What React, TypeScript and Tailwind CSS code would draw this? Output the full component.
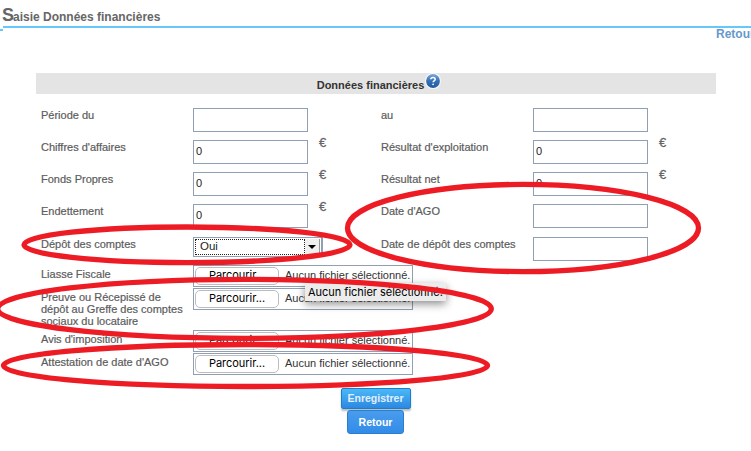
import React from "react";

const label = "block text-[11px] leading-[12px] text-[#5c5c5c] [-webkit-text-stroke:0.2px_#5c5c5c]";

function Field({ value = "" }: { value?: string }) {
  return (
    <div className="h-6 w-[115px] border border-[#90a0b2] bg-white pl-[2px] pt-[4px] text-[11px] leading-[13px] text-[#222]">
      {value}
    </div>
  );
}

function Cell({ text, value, euro }: { text: string; value?: string; euro?: boolean }) {
  return (
    <div className="flex w-[340px] shrink-0">
      <span className={`${label} w-[152px] shrink-0 pt-px`}>{text}</span>
      <Field value={value} />
      {euro && (
        <span className="ml-[11px] -mt-[4px] text-[13px] leading-[14px] text-[#666] [-webkit-text-stroke:0.3px_#666]">€</span>
      )}
    </div>
  );
}

function FileRow({ text, height }: { text: string; height: string }) {
  return (
    <div className={`flex ${height}`}>
      <span className={`${label} w-[152px] shrink-0 pr-[8px] pt-[3px]`}>{text}</span>
      <div className="flex h-[22px] w-[220px] items-start border border-[#90a0b2] bg-white pl-px pt-px">
        <span className="h-[18px] w-[84px] shrink-0 rounded-[5px] border border-[#bdbdbd] bg-white text-center font-[Inter,sans-serif] text-[11px] leading-[15px] tracking-[-0.02px] text-black">
          Parcourir...
        </span>
        <span className="ml-[6px] whitespace-nowrap text-[11px] leading-[16px] text-[#333]">
          Aucun fichier sélectionné.
        </span>
      </div>
    </div>
  );
}

function HelpIcon() {
  return (
    <svg className="ml-px h-4 w-4" viewBox="0 0 16 16">
      <defs>
        <linearGradient id="help" x1="0" y1="0" x2="0" y2="1">
          <stop offset="0" stopColor="#78a9dc" />
          <stop offset="0.5" stopColor="#3470b5" />
          <stop offset="1" stopColor="#2258a0" />
        </linearGradient>
      </defs>
      <circle cx="8" cy="8" r="8" fill="#f8f8f8" />
      <circle cx="8" cy="8" r="6.9" fill="url(#help)" />
      <path d="M5.8 6.3c.1-1.4 1-1.9 2.2-1.9s2.2.6 2.2 1.8c0 1.6-2.1 1.6-2.1 3.1" fill="none" stroke="#fff" strokeWidth="1.5" />
      <circle cx="8.1" cy="11.3" r="0.9" fill="#fff" />
    </svg>
  );
}

export default function App() {
  return (
    <div className="relative h-[451px] w-[751px] overflow-hidden bg-white font-['Liberation_Sans',Arial,sans-serif]">
      <header className="h-[26px] pl-[2px] pt-[6px]">
        <h1 className="flex items-baseline whitespace-nowrap text-[12px] font-bold leading-[18px] text-[#666]">
          <span className="w-[11px] text-[18px]">S</span>
          <span>aisie Données financières</span>
        </h1>
      </header>
      <div className="flex h-[5px]">
        <div className="mt-[3px] h-[2px] w-[3px] bg-[#66c8fa]" />
        <div className="h-[2px] flex-1 bg-[#66c8fa]" />
      </div>
      <div className="flex h-[42px] justify-end">
        <a className="-mt-[4px] w-[35px] whitespace-nowrap text-[12px] font-bold leading-[14px] text-[#6699cc]">Retour</a>
      </div>

      <main className="ml-9 w-[680px]">
        <div className="flex h-[21px] justify-center bg-[#e4e4e4] pl-[6px]">
          <h2 className="pt-[6px] text-[11px] font-bold leading-[12px] text-[#333]">Données financières</h2>
          <HelpIcon />
        </div>

        <div className="ml-[5px] pt-[14px]">
          <div className="flex h-8"><Cell text="Période du" /><Cell text="au" /></div>
          <div className="flex h-8"><Cell text="Chiffres d'affaires" value="0" euro /><Cell text="Résultat d'exploitation" value="0" euro /></div>
          <div className="flex h-8"><Cell text="Fonds Propres" value="0" euro /><Cell text="Résultat net" value="0" euro /></div>
          <div className="flex h-[33px]"><Cell text="Endettement" value="0" euro /><Cell text="Date d'AGO" /></div>
          <div className="flex h-[28px]">
            <div className="flex w-[340px] shrink-0">
              <span className={`${label} w-[152px] shrink-0 pt-px`}>Dépôt des comptes</span>
              <div className="flex h-5 w-[130px] border border-r-2 border-[#90a0b2] p-px">
                <span className="h-4 w-[110px] border border-dotted border-[#222] pl-[4px] text-[11.5px] leading-[13px] text-[#222]">Oui</span>
                <span className="flex flex-1 items-center justify-center border-r border-[#999] bg-[#f0f0f0]">
                  <span className="border-x-[4px] border-t-[4px] border-x-transparent border-t-black" />
                </span>
              </div>
            </div>
            <Cell text="Date de dépôt des comptes" />
          </div>
          <FileRow text="Liasse Fiscale" height="h-[23px]" />
          <FileRow text="Preuve ou Récepissé de dépôt au Greffe des comptes sociaux du locataire" height="h-[42px]" />
          <FileRow text="Avis d'imposition" height="h-[23px]" />
          <FileRow text="Attestation de date d'AGO" height="h-[35px]" />
        </div>
      </main>

      <div className="flex flex-col items-center text-[11px] font-bold text-white">
        <button className="h-[21px] w-[70px] whitespace-nowrap rounded-[2px] border border-[#1c7fc9] bg-linear-to-b from-[#4ab8f7] to-[#2c88e2] text-[10.5px] leading-[19px] text-[#e3effa] shadow-[0_2px_2px_#bbb]">
          Enregistrer
        </button>
        <button className="mt-px h-6 w-[57px] rounded-[3px] border border-[#287fcb] bg-linear-to-b from-[#4a9ced] to-[#318ce7] text-[10.5px] leading-[22px]">
          Retour
        </button>
      </div>

      <div className="absolute left-[305px] top-[283px] h-[18px] w-[141px] whitespace-nowrap bg-[#ececec] pl-[3px] font-[Inter,sans-serif] text-[11px] leading-[19px] tracking-[-0.02px] text-black shadow-[0_3px_8px_rgba(0,0,0,0.45)]">
        Aucun fichier sélectionné.
      </div>

      <svg className="absolute inset-0" width="751" height="451" fill="none" stroke="#ed1c24" strokeWidth="5.3">
        <ellipse cx="523" cy="228" rx="175.5" ry="43.6" />
        <ellipse cx="187" cy="244.8" rx="163" ry="17.8" />
        <ellipse cx="244.5" cy="308.8" rx="246.8" ry="29.5" />
        <ellipse cx="245.5" cy="365.5" rx="242" ry="21" />
      </svg>
    </div>
  );
}
